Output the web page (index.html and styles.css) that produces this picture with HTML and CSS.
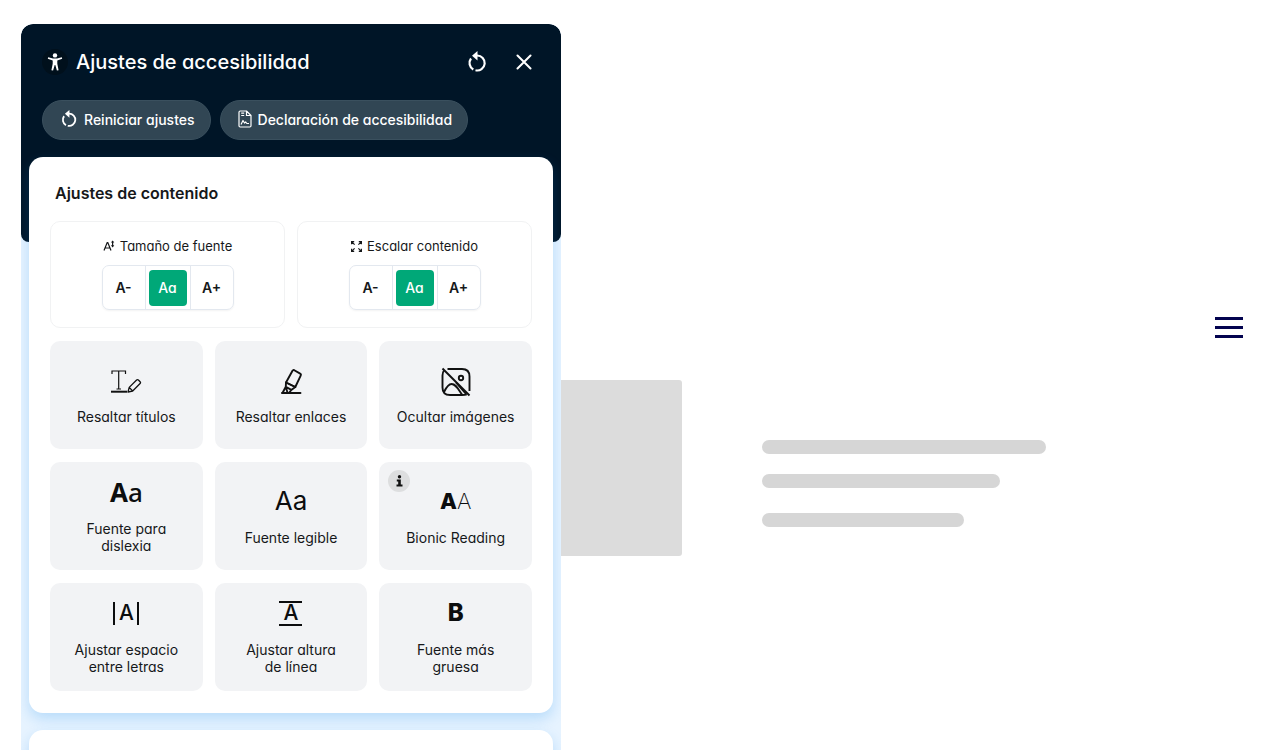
FILE: index.html
```html
<!DOCTYPE html>
<html lang="es">
<head>
    <meta charset="UTF-8">
    <meta name="viewport" content="width=device-width, initial-scale=1.0">
    <title>Ajustes de accesibilidad</title>
    <link rel="stylesheet" href="styles.css">
</head>
<body>
    <header class="site-header">
        <button class="menu-button" type="button" aria-label="Menú">
            <span></span>
            <span></span>
            <span></span>
        </button>
    </header>

    <main class="hero">
        <div class="hero-picture"></div>
        <div class="hero-lines">
            <div class="line line-long"></div>
            <div class="line line-medium"></div>
            <div class="line line-short"></div>
        </div>
    </main>

    <aside class="panel">
        <div class="panel-header">
            <div class="title-row">
                <span class="logo">
                    <svg width="16" height="18" viewBox="0 0 16 18" fill="#fff">
                        <circle cx="8" cy="2.4" r="2.2"/>
                        <path d="M1.2 4.2 6 5.600h4l4.800-1.400.4 1.500L10.300 7.400v3.300l1.300 6.600-1.700.3L8.300 12h-.6L6.100 17.600l-1.700-.3L5.700 10.700V7.400L.8 5.700z"/>
                    </svg>
                </span>
                <h1>Ajustes de accesibilidad</h1>
                <button class="icon-button" type="button" aria-label="Reiniciar">
                    <svg width="20" height="22" viewBox="0 0 20 22">
                        <path d="M10 4.500a7.500 7.500 0 1 1-1.500 14.800M6.300 18.500A7.500 7.500 0 0 1 4 7.500" fill="none" stroke="#fff" stroke-width="2.200"/>
                        <path d="M10.500 0v9.500L5 4.700z" fill="#fff"/>
                    </svg>
                </button>
                <button class="icon-button" type="button" aria-label="Cerrar">
                    <svg width="16" height="16" viewBox="0 0 16 16" fill="none" stroke="#fff" stroke-width="2" stroke-linecap="round">
                        <path d="M1.500 1.500l13 13M14.500 1.500l-13 13"/>
                    </svg>
                </button>
            </div>
            <div class="actions">
                <button class="pill" type="button">
                    <svg width="18" height="18" viewBox="0 0 20 22">
                        <path d="M10 4.500a7.500 7.500 0 1 1-1.500 14.800M6.300 18.500A7.500 7.500 0 0 1 4 7.500" fill="none" stroke="#fff" stroke-width="2.200"/>
                        <path d="M10.500 0v9.500L5 4.700z" fill="#fff"/>
                    </svg>
                    Reiniciar ajustes
                </button>
                <button class="pill" type="button">
                    <svg width="14" height="18" viewBox="0 0 14 18" fill="none" stroke="#fff" stroke-width="1.200" stroke-linejoin="round">
                        <path d="M2.200 1h6.300L13 5.500v10.300c0 .7-.5 1.200-1.200 1.200H2.200C1.500 17 1 16.500 1 15.800V2.200C1 1.500 1.500 1 2.200 1zM8.500 1v4.500H13M3.200 3.200h3M3.200 5.500h3M3 14.500l2-4 1.500 2.500 1.200-1 1.200 1.500H11"/>
                    </svg>
                    Declaración de accesibilidad
                </button>
            </div>
        </div>

        <div class="panel-body">
            <section class="card">
                <h2>Ajustes de contenido</h2>

                <div class="scales">
                    <div class="scale" role="group" aria-labelledby="font-size-label">
                        <div class="scale-label" id="font-size-label">
                            <svg width="12" height="12" viewBox="0 0 12 12" fill="none" stroke="#16181a" stroke-width="1.200">
                                <path d="M1 10.500 4.200 2.500h.6L8 10.500M2.200 8h4.600"/>
                                <path d="M9.600 1.500v5"/>
                                <path d="M7.900 2.600 9.600.4l1.700 2.200zM7.900 5.300l1.700 2.200 1.700-2.200z" fill="#16181a" stroke="none"/>
                            </svg>
                            Tamaño de fuente
                        </div>
                        <div class="stepper">
                            <button type="button">A-</button>
                            <button class="active" type="button"><span>Aa</span></button>
                            <button type="button">A+</button>
                        </div>
                    </div>
                    <div class="scale" role="group" aria-labelledby="scale-label">
                        <div class="scale-label" id="scale-label">
                            <svg width="11" height="11" viewBox="0 0 11 11" fill="none" stroke="#16181a" stroke-width="1.200">
                                <path d="M.6 3.200V.6h2.600M.6.6l3 3M7.800.6h2.600v2.600M10.400.6l-3 3M.6 7.800v2.600h2.600M.6 10.400l3-3M7.800 10.400h2.600V7.800M10.400 10.400l-3-3"/>
                            </svg>
                            Escalar contenido
                        </div>
                        <div class="stepper">
                            <button type="button">A-</button>
                            <button class="active" type="button"><span>Aa</span></button>
                            <button type="button">A+</button>
                        </div>
                    </div>
                </div>

                <div class="tiles">
                    <button class="tile" type="button">
                        <svg width="32" height="32" viewBox="0 0 32 32" fill="none" stroke="#111">
                            <path d="M2 8V5h13.500v3M8.700 5v18M6.500 23h4.500" stroke-width="1.200"/>
                            <path d="M1 25.700h16" stroke-width="2"/>
                            <path d="M18 26l1.200-4.600 7.400-7.400c.6-.6 1.200-.6 1.800 0l1.700 1.700c.6.6.6 1.200 0 1.800L22.700 25zM19.200 21.400l3.500 3.600" stroke-width="1.300" stroke-linejoin="round"/>
                        </svg>
                        Resaltar títulos
                    </button>
                    <button class="tile" type="button">
                        <svg width="32" height="32" viewBox="0 0 32 32" fill="none" stroke="#111" stroke-width="1.900" stroke-linejoin="round" stroke-linecap="round">
                            <path d="M7 27h18.500"/>
                            <path d="M11 16.500 17.500 4.800c.4-.8 1-1 1.800-.6l5.900 3.400c.8.4 1 1 .6 1.800L20.300 21z"/>
                            <path d="M11 16.500l-.2 4.200 5.500 3.200 4-2.900M10.800 20.700 7.500 27M16.300 23.900 14 27M11 16.500l9.300 4.500M10.800 20.700l1.700 6"/>
                        </svg>
                        Resaltar enlaces
                    </button>
                    <button class="tile" type="button">
                        <svg width="32" height="32" viewBox="0 0 32 32" fill="none" stroke="#111" stroke-width="1.900" stroke-linejoin="round">
                            <path d="M7.500 3H22c5 0 7.500 2.500 7.500 7.500V25M26.800 28.300c-1.200.5-2.700.7-4.800.7H10c-5 0-7.500-2.500-7.500-7.500v-12c0-2.200.5-3.800 1.500-5"/>
                            <path d="M2.500 2.500l27 27"/>
                            <circle cx="21" cy="12" r="2.200"/>
                            <path d="M4 26c2.500-5 4.500-8 7.500-8 4.500 0 6.500 5 10.500 10.500M16 16.500l10 11.500"/>
                        </svg>
                        Ocultar imágenes
                    </button>

                    <button class="tile" type="button">
                        <span class="glyph glyph-dyslexia"><b>A</b>a</span>
                        Fuente para<br>dislexia
                    </button>
                    <button class="tile" type="button">
                        <span class="glyph glyph-legible">Aa</span>
                        Fuente legible
                    </button>
                    <button class="tile" type="button">
                        <span class="info">
                            <svg width="7" height="12" viewBox="0 0 7 12" fill="#111">
                                <circle cx="3.500" cy="1.800" r="1.700"/>
                                <path d="M.8 4.600h4v5h1.700v2H.5v-2h1.700v-3H.8z"/>
                            </svg>
                        </span>
                        <span class="glyph glyph-bionic"><b>A</b>A</span>
                        Bionic Reading
                    </button>

                    <button class="tile" type="button">
                        <span class="glyph"><span class="bars bars-side">A</span></span>
                        Ajustar espacio<br>entre letras
                    </button>
                    <button class="tile" type="button">
                        <span class="glyph"><span class="bars bars-stacked">A</span></span>
                        Ajustar altura<br>de línea
                    </button>
                    <button class="tile" type="button">
                        <span class="glyph glyph-bold">B</span>
                        Fuente más<br>gruesa
                    </button>
                </div>
            </section>

            <section class="card card-next"></section>
        </div>
    </aside>
</body>
</html>
```
FILE: styles.css
```css
* {
    box-sizing: border-box;
}
body {
    margin: 0;
    height: 100vh;
    overflow: hidden;
    background-color: #fff;
    color: #16181a;
    font-family: Inter, "Liberation Sans", sans-serif;
    font-size: 14px;
    font-feature-settings: "cv11";
}
button {
    margin: 0;
    padding: 0;
    border: none;
    background: none;
    color: inherit;
    font: inherit;
    font-feature-settings: inherit;
    cursor: pointer;
}
svg {
    display: block;
    flex: none;
}

/* Page behind the panel */
.site-header {
    display: flex;
    justify-content: flex-end;
    padding: 317px 37px 0 0;
}
.menu-button {
    display: flex;
    flex-direction: column;
    gap: 6px;
    width: 28px;
}
.menu-button span {
    height: 3px;
    background-color: #03034f;
}
.hero {
    display: flex;
    gap: 80px;
    padding: 42px 37px 0 442px;
}
.hero-picture {
    flex: none;
    width: 240px;
    height: 176px;
    border-radius: 3px;
    background-color: #dcdcdc;
}
.hero-lines {
    flex: 1;
    padding-top: 60px;
}
.line {
    height: 14px;
    margin-bottom: 20px;
    border-radius: 7px;
    background-color: #d6d6d6;
}
.line-long {
    width: 284px;
}
.line-medium {
    width: 238px;
    margin-bottom: 25px;
}
.line-short {
    width: 202px;
}

/* Accessibility panel */
.panel {
    position: fixed;
    top: 24px;
    bottom: 0;
    left: 21px;
    width: 540px;
    overflow: hidden;
    border-radius: 12px 12px 0 0;
    background-color: #e6f3ff;
}
.panel-header {
    height: 218px;
    padding: 20px 21px 0;
    border-radius: 12px 12px 8px 8px;
    background-color: #001527;
    color: #fff;
}
.title-row {
    display: flex;
    align-items: center;
    height: 36px;
}
.logo {
    display: flex;
    align-items: center;
    justify-content: center;
    width: 26px;
    height: 26px;
    border-radius: 50%;
    background-color: #00101c;
}
h1 {
    flex: 1;
    margin: 0 0 0 8px;
    font-size: 20px;
    line-height: 28px;
    font-weight: 500;
}
.icon-button {
    display: flex;
    align-items: center;
    justify-content: center;
    width: 32px;
    height: 32px;
    margin-left: 15px;
}
.actions {
    display: flex;
    gap: 9px;
    margin-top: 20px;
}
.pill {
    display: flex;
    align-items: center;
    gap: 6px;
    height: 40px;
    padding: 0 15px 2px 17px;
    border: 1px solid #3a505e;
    border-radius: 20px;
    background-color: #314654;
    font-weight: 500;
}
.panel-body {
    margin-top: -85px;
    padding: 0 8px;
}
.card {
    padding: 24px 21px 22px;
    border-radius: 14px;
    background-color: #fff;
    box-shadow: 0 6px 14px rgba(0, 128, 230, 0.2);
}
.card-next {
    height: 200px;
    margin-top: 17px;
}
h2 {
    margin: 0 0 16px 5px;
    font-size: 16px;
    line-height: 24px;
    font-weight: 600;
}
.scales {
    display: grid;
    grid-template-columns: 1fr 1fr;
    gap: 12px;
    margin-bottom: 13px;
}
.scale {
    display: flex;
    flex-direction: column;
    align-items: center;
    gap: 9px;
    height: 107px;
    padding-top: 14px;
    border: 1px solid #f1f2f3;
    border-radius: 10px;
}
.scale-label {
    display: flex;
    align-items: center;
    gap: 5px;
    font-size: 13px;
    line-height: 20px;
}
.stepper {
    display: flex;
    height: 45px;
    border: 1px solid #e3e8ef;
    border-radius: 7px;
    box-shadow: 0 1px 2px rgba(0, 0, 0, 0.05);
}
.stepper button {
    width: 42px;
    font-weight: 600;
}
.stepper .active {
    width: 46px;
    padding: 3px;
    border: solid #e3e8ef;
    border-width: 0 1px;
    font-weight: 500;
}
.active span {
    display: flex;
    align-items: center;
    justify-content: center;
    height: 36px;
    border-radius: 4px;
    background-color: #00a878;
    color: #fff;
}

.tiles {
    display: grid;
    grid-template-columns: repeat(3, 1fr);
    gap: 13px 12px;
}
.tile {
    position: relative;
    display: flex;
    flex-direction: column;
    align-items: center;
    justify-content: center;
    gap: 10px;
    height: 108px;
    border-radius: 10px;
    background-color: #f2f3f5;
    line-height: 17px;
}
.glyph {
    display: flex;
    align-items: center;
    justify-content: center;
    height: 32px;
    padding-bottom: 4px;
    color: #0c0d0e;
    font-feature-settings: normal;
    line-height: 24px;
}
.glyph b {
    font-weight: 800;
}
.glyph-dyslexia {
    font-family: "Noto Sans", sans-serif;
    font-size: 26px;
    font-weight: 500;
}
.glyph-dyslexia b {
    font-weight: 700;
}
.glyph-legible {
    font-size: 26px;
}
.glyph-bionic {
    font-size: 22px;
    font-weight: 200;
}
.glyph-bold {
    font-size: 24px;
    font-weight: 800;
}
.bars {
    display: flex;
    align-items: center;
    justify-content: center;
    border: 0 solid #0c0d0e;
    font-size: 21px;
    font-weight: 500;
}
.bars-side {
    width: 26px;
    height: 23px;
    border-width: 0 2px;
}
.bars-stacked {
    width: 23px;
    height: 25px;
    border-width: 2px 0;
}
.info {
    position: absolute;
    top: 8px;
    left: 9px;
    display: flex;
    align-items: center;
    justify-content: center;
    width: 22px;
    height: 22px;
    border-radius: 50%;
    background-color: #dddedf;
}
```
